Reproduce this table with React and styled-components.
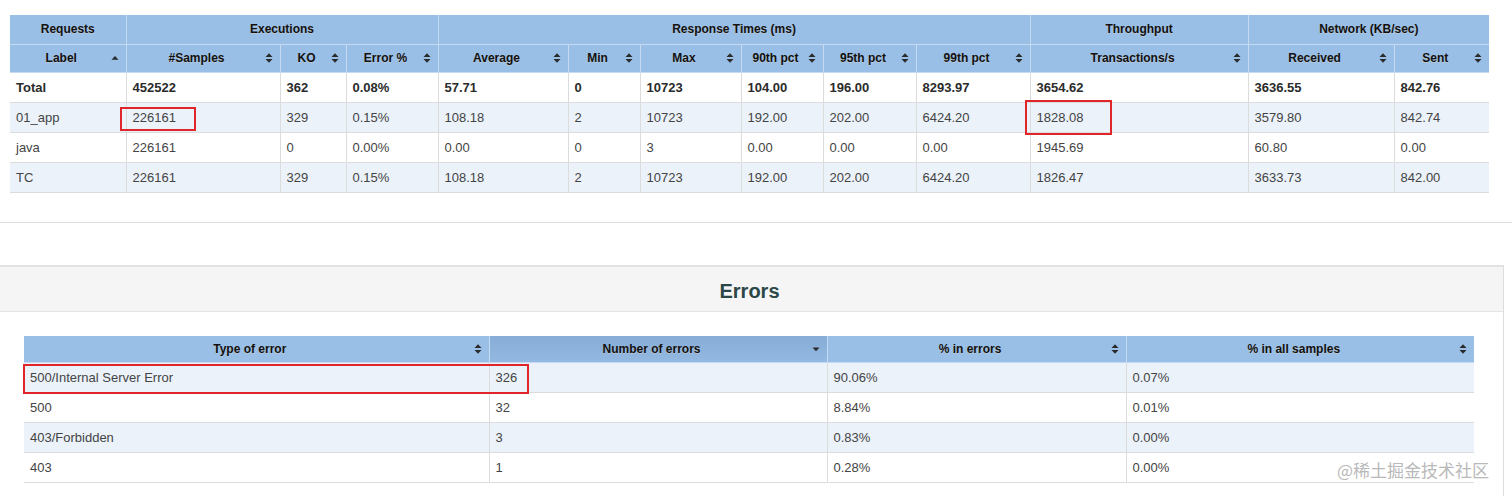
import React from 'react';
import styled, { createGlobalStyle, css } from 'styled-components';

const colors = {
  head: '#99bfe6',
  headSorted: '#8cb2dc',
  headLine: '#c6daf1',
  stripe: '#ebf2fa',
  cellLine: '#dcdcdc',
  text: '#444444',
  strong: '#2b2b2b',
  mark: '#e0262b',
  title: '#2c4747',
};

const GlobalStyle = createGlobalStyle`
  body {
    margin: 0;
    background: #ffffff;
    font-family: "Liberation Sans", Arial, sans-serif;
  }
  *, *:before, *:after { box-sizing: border-box; }
`;

const Page = styled.div`
  position: relative;
  padding-top: 15px;
  height: 496px;
  overflow: hidden;
`;

const StatsWrap = styled.div`
  margin: 0 10px;
  width: 1479px;
`;

const Table = styled.table`
  width: 100%;
  table-layout: fixed;
  border-collapse: collapse;
  border-bottom: 1px solid ${colors.cellLine};
`;

const Th = styled.th`
  position: relative;
  height: ${p => p.$h || 28}px;
  padding: 0 17px 0 4px;
  background: ${p => (p.$sorted ? colors.headSorted : colors.head)};
  ${p => p.$sorted && css`
    background: linear-gradient(#86acd7, #93b9e2);
  `}
  border: 1px solid ${colors.headLine};
  border-top: none;
  color: #111;
  font-size: 12px;
  font-weight: bold;
  text-align: center;
  white-space: nowrap;
  text-shadow: 0 1px 0 rgba(204, 204, 204, 0.6);

  &:first-child { border-left: none; }
  &:last-child { border-right: none; }
`;

const GroupTh = styled(Th)`
  padding: 0 4px;
`;

const SortIcon = styled.svg`
  position: absolute;
  right: 7px;
  top: 50%;
  width: 8px;
  height: 12px;
  margin-top: -6px;
  fill: #2a2a2a;
`;

const Row = styled.tr`
  td { background: ${p => (p.$striped ? colors.stripe : '#ffffff')}; }
`;

const Td = styled.td`
  position: relative;
  height: 30px;
  padding: 0 6px;
  border: 1px solid ${colors.cellLine};
  border-top: none;
  color: ${p => (p.$bold ? colors.strong : colors.text)};
  font-size: 13px;
  font-weight: ${p => (p.$bold ? 'bold' : 'normal')};
  white-space: nowrap;
  vertical-align: middle;

  &:first-child { border-left: none; }
  &:last-child { border-right: none; }
`;

const Mark = styled.span`
  position: absolute;
  left: ${p => p.$x}px;
  top: ${p => p.$y}px;
  width: ${p => p.$w}px;
  height: ${p => p.$h}px;
  border: 2px solid ${colors.mark};
  pointer-events: none;
  z-index: 2;
`;

const Divider = styled.div`
  margin-top: 29px;
  height: 1px;
  background: #dddddd;
`;

const Panel = styled.section`
  margin-top: 42px;
  width: 1504px;
  border: 1px solid #dddddd;
  border-left: none;
  border-top: 2px solid #e2e2e2;
  border-bottom: none;
  background: #ffffff;
`;

const PanelHeading = styled.div`
  height: 45px;
  display: flex;
  align-items: center;
  justify-content: center;
  padding-top: 5px;
  background: #f5f5f5;
  border-bottom: 1px solid #e4e4e4;
`;

const PanelTitle = styled.h2`
  margin: 0;
  padding-right: 4px;
  font-size: 20px;
  font-weight: bold;
  color: ${colors.title};
`;

const PanelBody = styled.div`
  padding: 24px 0 30px 24px;
`;

const ErrorsWrap = styled.div`
  width: 1450px;
`;

const Watermark = styled.div`
  position: absolute;
  left: 1337px;
  top: 457px;
  font-family: "Noto Sans CJK SC", "Liberation Sans", sans-serif;
  font-size: 17px;
  color: #b9b9b9;
  text-shadow: 0 0 2px #ffffff;
`;

const Sort = ({ dir }) => (
  <SortIcon viewBox="0 0 8 12">
    {!dir && <path d="M0.5 5 L4 1.2 L7.5 5 Z" />}
    {!dir && <path d="M0.5 7 L4 10.8 L7.5 7 Z" />}
    {dir === 'asc' && <path d="M0.5 7.8 L4 4 L7.5 7.8 Z" />}
    {dir === 'desc' && <path d="M0.5 4.5 L4 8.3 L7.5 4.5 Z" />}
  </SortIcon>
);

const statsCols = [116, 154, 66, 92, 130, 72, 101, 82, 93, 114, 218, 146, 95];

const groups = [
  ['Requests', 1],
  ['Executions', 3],
  ['Response Times (ms)', 6],
  ['Throughput', 1],
  ['Network (KB/sec)', 2],
];

const statsHead = [
  ['Label', 'asc'],
  ['#Samples'],
  ['KO'],
  ['Error %'],
  ['Average'],
  ['Min'],
  ['Max'],
  ['90th pct'],
  ['95th pct'],
  ['99th pct'],
  ['Transactions/s'],
  ['Received'],
  ['Sent'],
];

const statsRows = [
  ['Total', '452522', '362', '0.08%', '57.71', '0', '10723', '104.00', '196.00', '8293.97', '3654.62', '3636.55', '842.76'],
  ['01_app', '226161', '329', '0.15%', '108.18', '2', '10723', '192.00', '202.00', '6424.20', '1828.08', '3579.80', '842.74'],
  ['java', '226161', '0', '0.00%', '0.00', '0', '3', '0.00', '0.00', '0.00', '1945.69', '60.80', '0.00'],
  ['TC', '226161', '329', '0.15%', '108.18', '2', '10723', '192.00', '202.00', '6424.20', '1826.47', '3633.73', '842.00'],
];

// annotation boxes, keyed by "row:col"
const statsMarks = {
  '1:1': { x: -7, y: 4, w: 76, h: 24 },
  '1:10': { x: -6, y: -3, w: 87, h: 35 },
};

const errorCols = [465, 338, 299, 348];

const errorHead = [
  ['Type of error'],
  ['Number of errors', 'desc', true],
  ['% in errors'],
  ['% in all samples'],
];

const errorRows = [
  ['500/Internal Server Error', '326', '90.06%', '0.07%'],
  ['500', '32', '8.84%', '0.01%'],
  ['403/Forbidden', '3', '0.83%', '0.00%'],
  ['403', '1', '0.28%', '0.00%'],
];

const errorMarks = {
  '0:0': { x: -1, y: 1, w: 506, h: 30 },
};

const Cols = ({ widths }) => (
  <colgroup>
    {widths.map((w, i) => (
      <col key={i} style={{ width: w }} />
    ))}
  </colgroup>
);

const App = () => (
  <Page>
    <GlobalStyle />
    <StatsWrap>
      <Table>
        <Cols widths={statsCols} />
        <thead>
          <tr>
            {groups.map(([name, span]) => (
              <GroupTh key={name} colSpan={span} $h={29}>
                {name}
              </GroupTh>
            ))}
          </tr>
          <tr>
            {statsHead.map(([name, dir]) => (
              <Th key={name} $h={28}>
                {name}
                <Sort dir={dir} />
              </Th>
            ))}
          </tr>
        </thead>
        <tbody>
          {statsRows.map((row, r) => (
            <Row key={row[0]} $striped={r % 2 === 1}>
              {row.map((value, c) => {
                const m = statsMarks[`${r}:${c}`];
                return (
                  <Td key={c} $bold={r === 0}>
                    {value}
                    {m && <Mark $x={m.x} $y={m.y} $w={m.w} $h={m.h} />}
                  </Td>
                );
              })}
            </Row>
          ))}
        </tbody>
      </Table>
    </StatsWrap>

    <Divider />

    <Panel>
      <PanelHeading>
        <PanelTitle>Errors</PanelTitle>
      </PanelHeading>
      <PanelBody>
        <ErrorsWrap>
          <Table>
            <Cols widths={errorCols} />
            <thead>
              <tr>
                {errorHead.map(([name, dir, sorted]) => (
                  <Th key={name} $h={27} $sorted={sorted}>
                    {name}
                    <Sort dir={dir} />
                  </Th>
                ))}
              </tr>
            </thead>
            <tbody>
              {errorRows.map((row, r) => (
                <Row key={row[0]} $striped={r % 2 === 0}>
                  {row.map((value, c) => {
                    const m = errorMarks[`${r}:${c}`];
                    return (
                      <Td key={c}>
                        {value}
                        {m && <Mark $x={m.x} $y={m.y} $w={m.w} $h={m.h} />}
                      </Td>
                    );
                  })}
                </Row>
              ))}
            </tbody>
          </Table>
        </ErrorsWrap>
      </PanelBody>
    </Panel>

    <Watermark>@稀土掘金技术社区</Watermark>
  </Page>
);

export default App;
